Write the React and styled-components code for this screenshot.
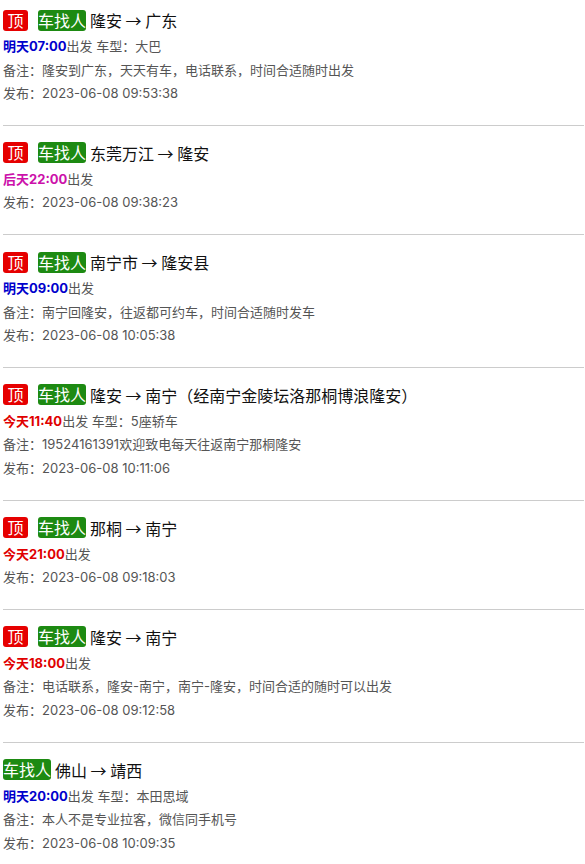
import React from 'react';
import styled, { createGlobalStyle } from 'styled-components';

const GlobalStyle = createGlobalStyle`
	body {
		margin: 0;
		background: #fff;
		font-family: "Inter", "Noto Sans CJK SC", sans-serif;
	}
`

const List = styled.ul`
	list-style: none;
	margin: 0;
	padding: 0 1px 0 3px;
`

const Item = styled.li`
	padding: 16px 0 19.25px;
	border-bottom: 1px solid #ccc;

	&:first-child {
		padding-top: 9px;
	}

	&:last-child {
		border-bottom: none;
	}
`

const Title = styled.div`
	display: flex;
	align-items: center;
	height: 22px;
	font-family: "Noto Sans CJK SC", sans-serif;
	font-size: 16px;
	color: #111;
	margin-bottom: 4px;
	white-space: pre;
`

const Badge = styled.span`
	display: inline-flex;
	align-items: center;
	justify-content: center;
	height: 21px;
	padding: 0 ${p => p.$pad}px;
	margin-right: ${p => p.$gap}px;
	border-radius: 3px;
	background: ${p => p.$bg};
	color: #fff;
	font-size: 16px;
	line-height: 21px;
`

const Line = styled.div`
	font-size: 13px;
	line-height: 23.5px;
	color: #555;
	white-space: nowrap;
`

const Time = styled.b`
	color: ${p => p.$color};
	font-weight: bold;
`

const dayColors = {
	'明天': '#0000cc',
	'后天': '#cc11aa',
	'今天': '#e00000',
}

const trips = [
	{ top: true, route: '隆安 → 广东', day: '明天', time: '07:00', car: '大巴', note: '隆安到广东，天天有车，电话联系，时间合适随时出发', pub: '2023-06-08 09:53:38' },
	{ top: true, route: '东莞万江 → 隆安', day: '后天', time: '22:00', pub: '2023-06-08 09:38:23' },
	{ top: true, route: '南宁市 → 隆安县', day: '明天', time: '09:00', note: '南宁回隆安，往返都可约车，时间合适随时发车', pub: '2023-06-08 10:05:38' },
	{ top: true, route: '隆安 → 南宁（经南宁金陵坛洛那桐博浪隆安）', day: '今天', time: '11:40', car: '5座轿车', note: '19524161391欢迎致电每天往返南宁那桐隆安', pub: '2023-06-08 10:11:06' },
	{ top: true, route: '那桐 → 南宁', day: '今天', time: '21:00', pub: '2023-06-08 09:18:03' },
	{ top: true, route: '隆安 → 南宁', day: '今天', time: '18:00', note: '电话联系，隆安-南宁，南宁-隆安，时间合适的随时可以出发', pub: '2023-06-08 09:12:58' },
	{ top: false, route: '佛山 → 靖西', day: '明天', time: '20:00', car: '本田思域', note: '本人不是专业拉客，微信同手机号', pub: '2023-06-08 10:09:35' },
]

export default function App() {
	return (
		<>
			<GlobalStyle />
			<List>
				{trips.map((t, i) => (
					<Item key={i}>
						<Title>
							{t.top && <Badge $bg="#e60000" $pad={4.5} $gap={10}>顶</Badge>}
							<Badge $bg="#1d8a12" $pad={0} $gap={4}>车找人</Badge>
							{t.route}
						</Title>
						<Line>
							<Time $color={dayColors[t.day]}>{t.day}{t.time}</Time>出发
							{t.car && <> 车型：{t.car}</>}
						</Line>
						{t.note && <Line>备注：{t.note}</Line>}
						<Line>发布：{t.pub}</Line>
					</Item>
				))}
			</List>
		</>
	)
}
